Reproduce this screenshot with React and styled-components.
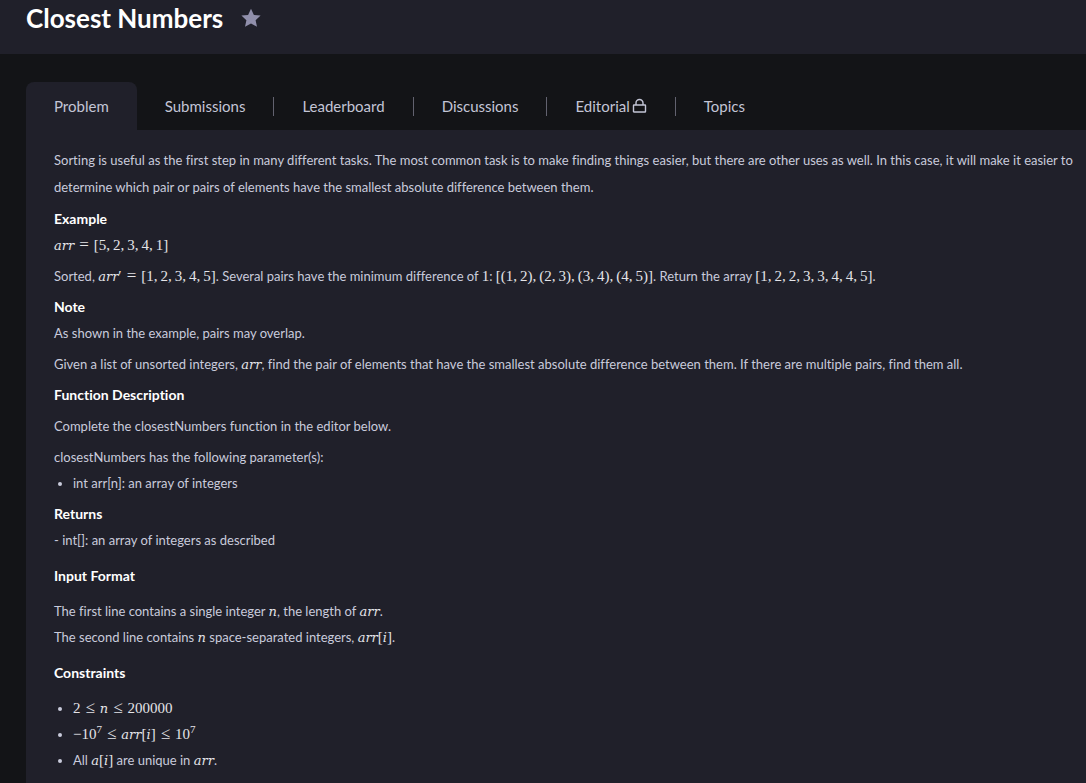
import React from 'react';
import styled, { createGlobalStyle } from 'styled-components';

const GlobalStyle = createGlobalStyle`
  * { box-sizing: border-box; }
  body {
    margin: 0;
    background: #131417;
    color: #c9cbdc;
    font-family: Lato, "Open Sans", sans-serif;
    font-size: 13px;
    font-variant-ligatures: none;
  }
`;

const Header = styled.header`
  display: flex;
  align-items: center;
  gap: 18px;
  padding: 2px 26px 20px;
  background: #20202a;
`;

const Title = styled.h1`
  margin: 0;
  font-size: 26px;
  line-height: 32px;
  font-weight: 700;
  color: #fff;
`;

const StarButton = styled.button`
  display: flex;
  padding: 0;
  border: 0;
  background: none;
  color: #908fab;
  cursor: pointer;
`;

const Main = styled.main`
  padding: 28px 0 0 26px;
`;

const Tabs = styled.nav`
  display: flex;
  align-items: center;
  height: 48px;
`;

const Tab = styled.a`
  display: flex;
  align-items: center;
  gap: 2px;
  height: 100%;
  padding: 0 28px;
  border-radius: 8px 8px 0 0;
  background: ${(p) => (p.$active ? '#20202a' : 'transparent')};
  color: #c3c5d6;
  font-size: 15px;
  text-decoration: none;
`;

const Divider = styled.span`
  width: 1px;
  height: 19px;
  background: #62626f;
`;

const Panel = styled.article`
  display: flex;
  flex-direction: column;
  gap: 10px;
  padding: 17px 0 24px 28px;
  background: #20202a;
`;

const Section = styled.section`
  display: flex;
  flex-direction: column;
  gap: ${(p) => p.$gap}px;
`;

const Block = styled.div`
  line-height: 26px;
`;

const Paragraph = styled.p`
  margin: 0;
  line-height: ${(p) => (p.$loose ? 27 : 26)}px;
`;

const Heading = styled.h2`
  margin: 0;
  font-size: 14px;
  line-height: 26px;
  font-weight: 700;
  color: #fff;
`;

const List = styled.ul`
  margin: 0;
  padding-left: 19px;
  line-height: 26px;
`;

const Formula = styled.span`
  font-family: "Liberation Serif", serif;
  font-size: 15px;
  line-height: 1;
  white-space: nowrap;
  color: #e4e4e8;
`;

const Var = styled.i`
  font-family: "DejaVu Serif", serif;
  font-size: 13px;
`;

const Relation = styled.span`
  margin: 0 5px;
  font-size: 17px;
  line-height: 1;
`;

const Power = styled.sup`
  font-size: 11px;
  line-height: 0;
`;

const THIN = '\u2009';
const row = (...items) => items.join(',' + THIN);

const Arr = () => <Formula><Var>arr</Var></Formula>;
const N = () => <Formula><Var>n</Var></Formula>;

const Star = () => (
  <svg width="20" height="20" viewBox="0 0 20 20" aria-hidden="true">
    <path fill="currentColor" d="M10 .8l2.900 6.100 6.700.700-5 4.600 1.400 6.600-6-3.400-6 3.400 1.400-6.600-5-4.600 6.700-.700z" />
  </svg>
);

const Lock = () => (
  <svg width="15" height="16" viewBox="0 0 15 16" fill="none" stroke="currentColor" strokeWidth="1.400" strokeLinejoin="round" aria-hidden="true">
    <rect x="1.500" y="7" width="12" height="7" rx="0.500" />
    <path d="M4 7V5a3.500 3.500 0 0 1 7 0v2" />
  </svg>
);

const tabs = ['Problem', 'Submissions', 'Leaderboard', 'Discussions', 'Editorial', 'Topics'];

export default function App() {
  return (
    <>
      <GlobalStyle />
      <Header>
        <Title>Closest Numbers</Title>
        <StarButton type="button" aria-label="Bookmark this challenge"><Star /></StarButton>
      </Header>
      <Main>
        <Tabs>
          {tabs.map((name, i) => (
            <React.Fragment key={name}>
              {i > 1 && <Divider />}
              <Tab href={`#${name.toLowerCase()}`} $active={i === 0} aria-current={i === 0 ? 'page' : undefined}>
                {name}
                {name === 'Editorial' && <Lock />}
              </Tab>
            </React.Fragment>
          ))}
        </Tabs>
        <Panel>
          <Section $gap={5}>
            <Paragraph $loose>
              Sorting is useful as the first step in many different tasks. The most common task is to make finding
              things easier, but there are other uses as well. In this case, it will make it easier to determine
              which pair or pairs of elements have the smallest absolute difference between them.
            </Paragraph>
            <Block>
              <Heading>Example</Heading>
              <Paragraph>
                <Formula><Var>arr</Var><Relation>=</Relation>[{row(5, 2, 3, 4, 1)}]</Formula>
              </Paragraph>
            </Block>
            <Paragraph>
              Sorted, <Formula><Var>arr</Var>′<Relation>=</Relation>[{row(1, 2, 3, 4, 5)}]</Formula>. Several pairs
              have the minimum difference of <Formula>1</Formula>:{' '}
              <Formula>[{row('(' + row(1, 2) + ')', '(' + row(2, 3) + ')', '(' + row(3, 4) + ')', '(' + row(4, 5) + ')')}]</Formula>.
              Return the array <Formula>[{row(1, 2, 2, 3, 3, 4, 4, 5)}]</Formula>.
            </Paragraph>
            <Block>
              <Heading>Note</Heading>
              <Paragraph>As shown in the example, pairs may overlap.</Paragraph>
            </Block>
            <Paragraph>
              Given a list of unsorted integers, <Arr />, find the pair of elements that have the smallest absolute
              difference between them. If there are multiple pairs, find them all.
            </Paragraph>
            <Heading>Function Description</Heading>
            <Paragraph>Complete the closestNumbers function in the editor below.</Paragraph>
            <Block>
              <Paragraph>closestNumbers has the following parameter(s):</Paragraph>
              <List>
                <li>int arr[n]: an array of integers</li>
              </List>
            </Block>
            <Block>
              <Heading>Returns</Heading>
              <Paragraph>- int[]: an array of integers as described</Paragraph>
            </Block>
          </Section>
          <Section $gap={9}>
            <Heading>Input Format</Heading>
            <Paragraph>
              The first line contains a single integer <N />, the length of <Arr />.<br />
              The second line contains <N /> space-separated integers,{' '}
              <Formula><Var>arr</Var>[<Var>i</Var>]</Formula>.
            </Paragraph>
          </Section>
          <Section $gap={9}>
            <Heading>Constraints</Heading>
            <List>
              <li><Formula>2<Relation>≤</Relation><Var>n</Var><Relation>≤</Relation>200000</Formula></li>
              <li>
                <Formula>
                  −10<Power>7</Power><Relation>≤</Relation><Var>arr</Var>[<Var>i</Var>]<Relation>≤</Relation>10<Power>7</Power>
                </Formula>
              </li>
              <li>All <Formula><Var>a</Var>[<Var>i</Var>]</Formula> are unique in <Arr />.</li>
            </List>
          </Section>
        </Panel>
      </Main>
    </>
  );
}
